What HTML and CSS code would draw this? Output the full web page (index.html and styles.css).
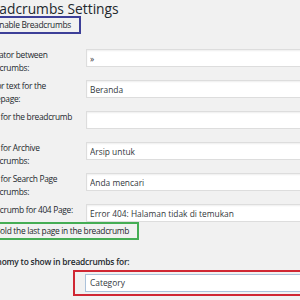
FILE: index.html
```html
<!DOCTYPE html>
<html>
    <head>
        <meta charset="utf-8"/>
        <link rel="stylesheet" href="styles.css">
    </head>
    <body>
        <div class="page">
            <h1 class="title">Breadcrumbs Settings</h1>

            <label class="option option-enable"><span class="check"></span>Enable Breadcrumbs</label>

            <div class="fields">
                <label class="field-label">Separator between breadcrumbs:</label>
                <input type="text" class="field" value="»">

                <label class="field-label">Anchor text for the Homepage:</label>
                <input type="text" class="field" value="Beranda">

                <label class="field-label">Prefix for the breadcrumb</label>
                <input type="text" class="field" value="">

                <label class="field-label">Prefix for Archive breadcrumbs:</label>
                <input type="text" class="field" value="Arsip untuk">

                <label class="field-label">Prefix for Search Page breadcrumbs:</label>
                <input type="text" class="field" value="Anda mencari">

                <label class="field-label">Breadcrumb for 404 Page:</label>
                <input type="text" class="field" value="Error 404: Halaman tidak di temukan">
            </div>

            <label class="option option-bold"><span class="check"></span>Bold the last page in the breadcrumb</label>

            <p class="tax-label">Taxonomy to show in breadcrumbs for:</p>
            <div class="tax-box">
                <div class="select">Category</div>
            </div>
        </div>
    </body>
</html>
```

FILE: styles.css
```css
body {
    margin: 0;
    padding: 0;
    width: 300px;
    height: 300px;
    overflow: hidden;
    background: #f1f1f1;
    color: #23282d;
    font-family: "Open Sans", "Noto Sans", sans-serif;
    font-size: 8.4px;
}

.page {
    margin-left: -22px;
    width: 420px;
}

.title {
    margin: 0 0 0 -1px;
    padding-top: 1px;
    height: 15px;
    font-size: 13.8px;
    font-weight: 400;
    line-height: 16px;
    white-space: nowrap;
}

.option {
    display: flex;
    align-items: center;
    width: max-content;
    height: 14px;
    margin-left: -1px;
    padding: 0 8px 0 3px;
    line-height: 14px;
    letter-spacing: -0.3px;
    white-space: nowrap;
}

.option-enable { border: 2px solid #3d3f98; }
.option-bold { border: 2px solid #45ad55; }

.check {
    width: 9px;
    height: 9px;
    margin-right: 4px;
    background: #fff;
    border: 1px solid #bbb;
    box-sizing: border-box;
}

.fields {
    display: grid;
    grid-template-columns: 100px 1fr;
    grid-auto-rows: 18px;
    column-gap: 8px;
    row-gap: 13px;
    margin-top: 15px;
}

.field-label {
    line-height: 12.6px;
    letter-spacing: -0.3px;
}

.field {
    box-sizing: border-box;
    width: 100%;
    height: 18px;
    margin: 0;
    padding: 0 3px;
    border: 1px solid #ddd;
    box-shadow: inset 0 1px 2px rgba(0, 0, 0, .07);
    background: #fff;
    color: #32373c;
    font-family: inherit;
    font-size: 8.4px;
    outline: none;
}

.tax-label {
    margin: 16px 0 0;
    line-height: 12.6px;
    font-weight: 600;
    letter-spacing: -0.2px;
    white-space: nowrap;
}

.tax-box {
    margin: 1px 0 0 95px;
    padding: 2px 10px;
    border: 2px solid #d02733;
}

.select {
    height: 18px;
    box-sizing: border-box;
    padding: 0 4px;
    border: 1px solid #abc2da;
    background: #fff;
    color: #32373c;
    line-height: 16px;
}
```
